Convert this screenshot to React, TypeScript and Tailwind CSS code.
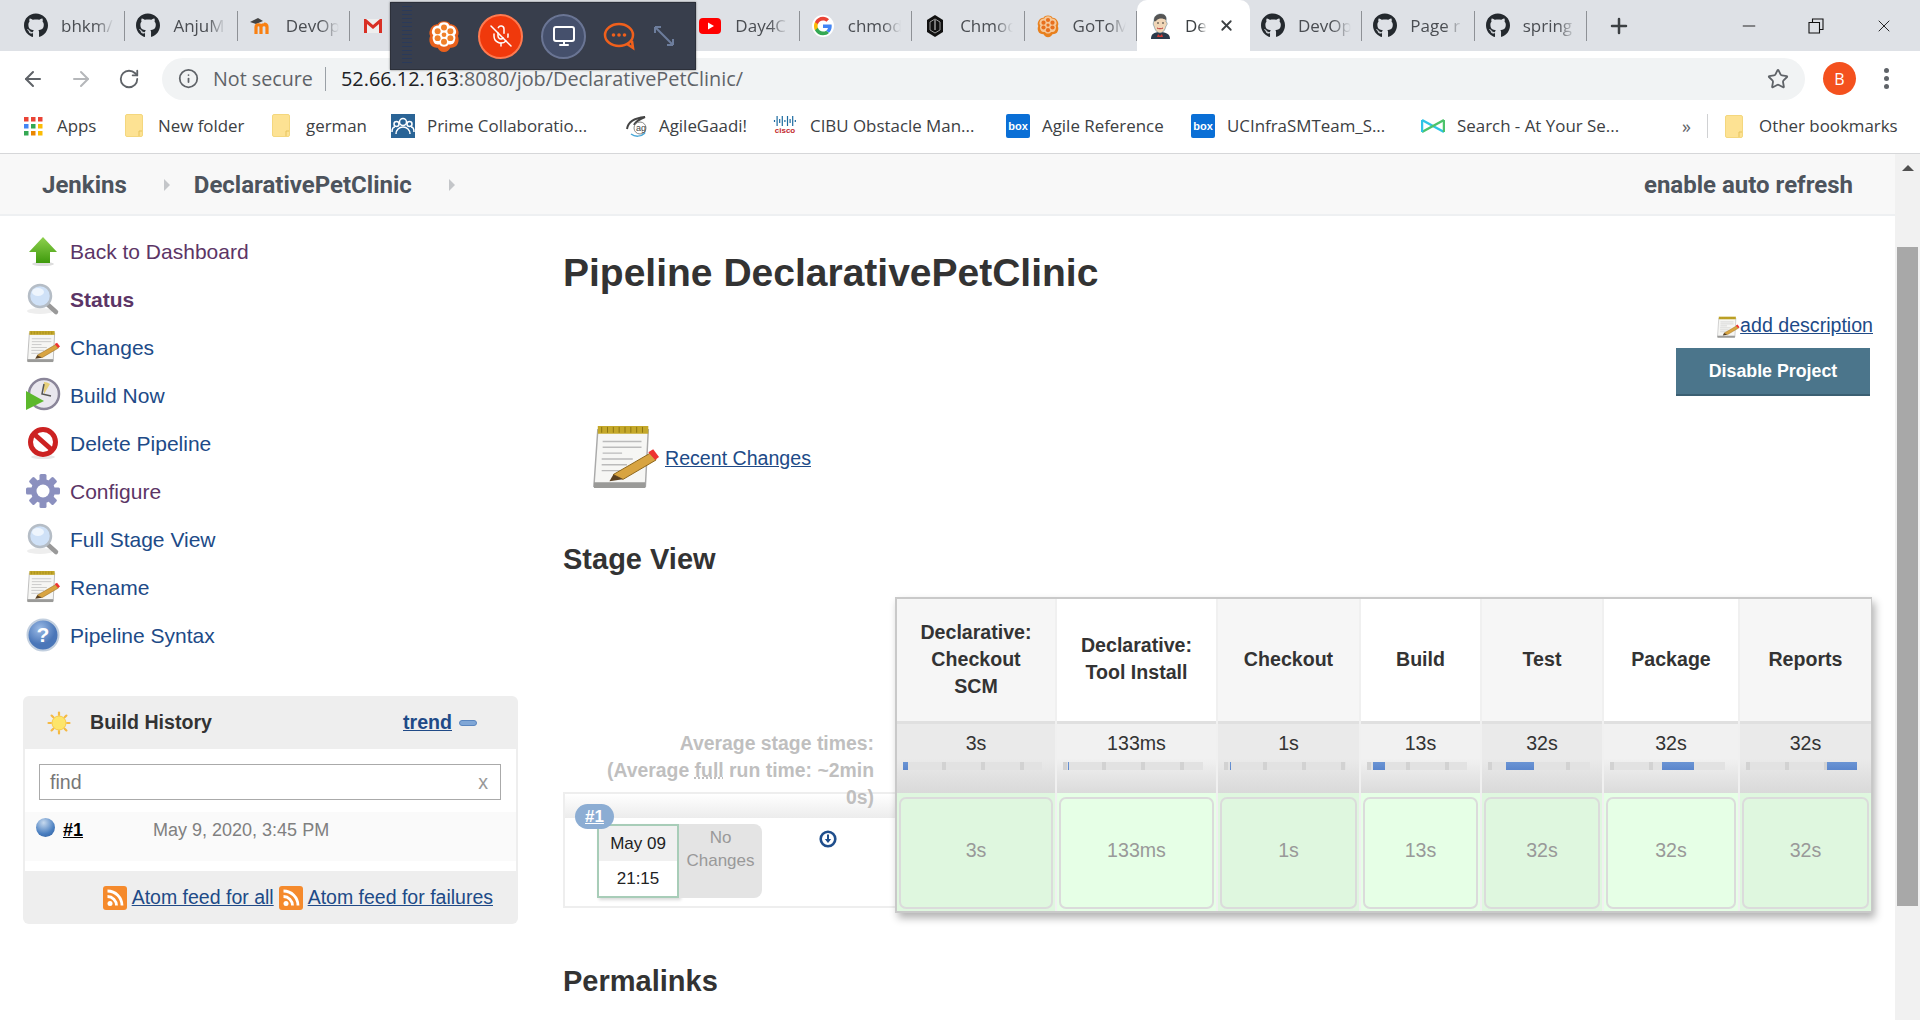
import React from "react";
import { FaGithub } from "react-icons/fa";
import { ArrowLeft, ArrowRight, RotateCw, Star, Info, Plus, X, Minus, MicOff, Monitor } from "lucide-react";

const Gmail = () => (
  <svg width="20" height="18" viewBox="0 0 20 18"><rect x="1" y="2" width="18" height="14" fill="#eee" /><path d="M1 2v14h3V7l6 5 6-5v9h3V2h-2l-7 6-7-6z" fill="#d93025" /></svg>
);
const Moodle = () => (
  <svg width="24" height="22" viewBox="0 0 24 22"><path d="M1 7l8-4 5 3-7 3z" fill="#444" /><path d="M7 19v-7c0-3 5-3 5 0v7M12 19v-7c0-3 6-3 6 0v7M18 19v-7c0-2-1-3-3-3" fill="none" stroke="#f98012" strokeWidth="3.2" /></svg>
);
const YouTube = () => (
  <svg width="22" height="16" viewBox="0 0 22 16"><rect width="22" height="16" rx="4" fill="#f00" /><path d="M9 4.500l6 3.500-6 3.500z" fill="#fff" /></svg>
);
const GoogleG = () => (
  <svg width="22" height="22" viewBox="0 0 48 48"><circle cx="24" cy="24" r="24" fill="#fff" /><path d="M43 24.500c0-1.400-.1-2.700-.3-4H24v7.600h10.800c-.5 2.500-1.900 4.600-4 6l6.200 4.800c3.700-3.400 6-8.400 6-14.400z" fill="#4285f4" /><path d="M24 44c5.400 0 9.900-1.800 13-4.900l-6.200-4.800c-1.800 1.200-4 1.900-6.800 1.900-5.200 0-9.600-3.500-11.200-8.200H6.400v5C9.700 39.500 16.300 44 24 44z" fill="#34a853" /><path d="M12.800 28c-.4-1.200-.6-2.600-.6-4s.2-2.800.6-4v-5H6.400C5 17.600 4.300 20.700 4.300 24s.7 6.400 2.100 9z" fill="#fbbc05" /><path d="M24 11.800c3 0 5.600 1 7.600 3l5.500-5.500C33.900 6.200 29.400 4 24 4 16.300 4 9.700 8.500 6.400 15l6.400 5c1.600-4.700 6-8.200 11.200-8.200z" fill="#ea4335" /></svg>
);
const Chmod = () => (
  <svg width="20" height="24" viewBox="0 0 20 24"><path d="M10 1l8 5v12l-8 5-8-5V6z" fill="#111" /><path d="M10 5l5 3v8l-5 3-5-3V8z" fill="none" stroke="#999" strokeWidth="1" /><path d="M10 6v10" stroke="#ddd" strokeWidth="1" /></svg>
);
const Flower = ({ s = 24, body, dots, shade }: { s?: number; body: string; dots: string; shade: string }) => (
  <svg width={s} height={s} viewBox="0 0 32 32">
    <path d="M16 2c3 0 5 1 6 3 3 0 6 2 7 5 1 2 1 4 0 6 1 2 1 5 0 7-1 3-4 4-7 4-1 2-3 4-6 4s-5-2-6-4c-3 0-6-1-7-4-1-2-1-5 0-7-1-2-1-4 0-6 1-3 4-5 7-5 1-2 3-3 6-3z" fill={shade} />
    <path d="M16 3c3 0 4 1 5 3 3 0 5 1 6 4s0 4-1 5c1 2 1 3 0 6s-3 3-6 3c-1 2-2 2-4 2s-3 0-4-2c-3 0-5 0-6-3s-1-4 0-6c-1-1-2-2-1-5s3-4 6-4c1-2 2-3 5-3z" fill={body} />
    <g fill={dots}><circle cx="16" cy="8" r="2.800" /><circle cx="16" cy="21.500" r="2.800" /><circle cx="10" cy="11.500" r="2.800" /><circle cx="22" cy="11.500" r="2.800" /><circle cx="10" cy="18" r="2.800" /><circle cx="22" cy="18" r="2.800" /><circle cx="16" cy="14.800" r="2.200" /></g>
  </svg>
);
const JenkinsHead = () => (
  <svg width="24" height="26" viewBox="0 0 24 26">
    <path d="M3 26c0-5 3-7 9-7s10 2 10 7z" fill="#2b3a4a" /><path d="M10 21l2 2 2-2 1 3h-6z" fill="#d33833" />
    <path d="M6 8c0-5 3-7 7-7s6 3 5 8c1 0 2 2 0 4-1 4-3 7-6 7-3 0-5-3-6-7-1-1-1-3 0-5z" fill="#f0d6b7" stroke="#49728b" strokeWidth=".5" /><path d="M6 8c0-5 3-7 7-7s6 3 5 6c-3-2-7-2-9 0-1 1-2 2-3 1z" fill="#555" /><circle cx="10" cy="10" r=".8" fill="#222" /><circle cx="15" cy="10" r=".8" fill="#222" /><path d="M9 15c2 1 4 1 6 0" stroke="#b33" fill="none" />
  </svg>
);
const Folder = () => (
  <svg width="18" height="23" viewBox="0 0 18 23"><rect x=".5" y=".5" width="17" height="22" rx="1.500" fill="#fde293" stroke="#f4d77e" /><path d="M14 22v-5h3" fill="none" stroke="#e6c35c" /></svg>
);
const Apps = () => (
  <svg width="20" height="20" viewBox="0 0 20 20">
    {[["#ea4335", "#ea4335", "#ea4335"], ["#4285f4", "#34a853", "#fbbc05"], ["#34a853", "#ea8600", "#fbbc05"]].map((r, i) =>
      r.map((c, j) => <rect key={`${i}${j}`} x={1 + j * 7} y={1 + i * 7} width="4.500" height="4.500" fill={c} />)
    )}
  </svg>
);
const Prime = () => (
  <svg width="24" height="24" viewBox="0 0 24 24"><rect width="24" height="24" fill="#2a6496" /><g fill="none" stroke="#fff" strokeWidth="1.500"><circle cx="12" cy="8" r="3.500" /><circle cx="5.500" cy="10" r="2.500" /><circle cx="18.500" cy="10" r="2.500" /><path d="M5 20c0-4 3-7 7-7s7 3 7 7" /><path d="M1 18c0-3 1-5 3-5M23 18c0-3-1-5-3-5" /></g></svg>
);
const Agile = () => (
  <svg width="24" height="22" viewBox="0 0 24 22"><path d="M2 14C3 7 10 3 20 2c-5 2-9 4-11 8" fill="none" stroke="#444" strokeWidth="2" /><circle cx="15" cy="13" r="6" fill="#fff" stroke="#888" /><text x="11" y="16" fontSize="9" fill="#444" fontFamily="Liberation Sans">ag</text><path d="M6 19c4 3 10 3 14-1" fill="none" stroke="#4aa8d8" strokeWidth="1.500" /></svg>
);
const Cisco = () => (
  <div className="flex flex-col items-center w-[24px]">
    <svg width="24" height="10" viewBox="0 0 24 10"><g stroke="#1b6aa0" strokeWidth="1.200">{[[4, 6], [0, 10], [3, 7], [0, 10], [4, 6], [0, 10], [3, 7], [0, 10], [4, 6]].map(([a, b], i) => <line key={i} x1={1.500 + i * 2.600} x2={1.500 + i * 2.600} y1={a} y2={b} />)}</g></svg>
    <span className="text-[8px] leading-[9px] font-bold text-[#c3272b] font-['Liberation_Sans',sans-serif]">cisco</span>
  </div>
);
const BoxIcon = () => (
  <div className="w-[24px] h-[24px] rounded-[2px] bg-[#0a6fd6] flex items-center justify-center text-white text-[11px] font-bold font-['Liberation_Sans',sans-serif]">box</div>
);
const SearchBm = () => (
  <svg width="24" height="16" viewBox="0 0 24 16"><path d="M1 2l22 12" stroke="#2ec4e6" strokeWidth="2.500" /><path d="M1 14L23 2" stroke="#4cc36a" strokeWidth="2.500" /><path d="M1 2v12" stroke="#2ec4e6" strokeWidth="2.500" /><path d="M23 2v12" stroke="#4cc36a" strokeWidth="2.500" /></svg>
);

/* ---------- Jenkins icons ---------- */
const ArrowUp = () => (
  <svg width="32" height="32" viewBox="0 0 32 32"><defs><linearGradient id="ga" x1="0" y1="0" x2="0" y2="1"><stop offset="0" stopColor="#8fd14f" /><stop offset="1" stopColor="#3e9a0c" /></linearGradient></defs><ellipse cx="16" cy="29" rx="11" ry="2" fill="#ddd" /><path d="M16 2L30 17h-7v11H9V17H2z" fill="url(#ga)" /></svg>
);
const Magnifier = () => (
  <svg width="36" height="34" viewBox="0 0 36 34"><ellipse cx="15" cy="29" rx="13" ry="3" fill="#eee" /><path d="M21 21l10 9" stroke="#999" strokeWidth="4.500" strokeLinecap="round" /><circle cx="15" cy="14" r="11" fill="#cfe1f7" stroke="#b5bdc6" strokeWidth="2.500" /><ellipse cx="13" cy="10" rx="6" ry="4" fill="#eef5fd" /></svg>
);
const Notepad = ({ w = 36, h = 34 }: { w?: number; h?: number }) => (
  <svg width={w} height={h} viewBox="0 0 72 70">
    <path d="M8 6h52l-3 58H4z" fill="#f6f6f4" stroke="#aaa" strokeWidth="1.500" />
    <path d="M4 60h53v6H4z" fill="#9a9a98" />
    <path d="M8 2h52v8H8z" fill="#c4a82a" />
    <g stroke="#8c7510" strokeWidth="1">{[12, 18, 24, 30, 36, 42, 48, 54].map((x) => <line key={x} x1={x} x2={x} y1="3" y2="9" />)}</g>
    <g stroke="#bbb" strokeWidth="1.500"><path d="M13 18h40M13 24h40M13 30h20M12 36h32M12 42h26M12 48h20" /></g>
    <path d="M24 52L62 30l6 7-34 20z" fill="#d8a441" stroke="#8c6418" /><path d="M24 52l10 5-14 2z" fill="#5a4020" /><path d="M60 29l5-3 6 8-4 3z" fill="#e33" />
  </svg>
);
const BuildNow = () => (
  <svg width="36" height="36" viewBox="0 0 36 36"><circle cx="19" cy="17" r="15" fill="#e9e7ee" stroke="#8a8599" strokeWidth="2.500" /><path d="M19 17V5a12 12 0 0 1 6 2z" fill="#e6cf7a" /><path d="M19 7l-2 10 9 2" fill="none" stroke="#555" strokeWidth="1.500" /><path d="M1 14l18 10L1 33z" fill="#5cb82c" /></svg>
);
const Prohibit = () => (
  <svg width="32" height="34" viewBox="0 0 32 34"><ellipse cx="16" cy="31" rx="12" ry="2" fill="#e8e8e8" /><circle cx="16" cy="16" r="12.500" fill="#fff" stroke="#cc2222" strokeWidth="5" /><path d="M7 8l18 16" stroke="#cc2222" strokeWidth="5" /></svg>
);
const Gear = () => (
  <svg width="36" height="36" viewBox="0 0 36 36"><g fill="#8b90bf"><circle cx="18" cy="18" r="12" />{[0, 45, 90, 135, 180, 225, 270, 315].map((a) => <rect key={a} x="14.500" y="1" width="7" height="9" rx="1.500" transform={`rotate(${a} 18 18)`} />)}</g><circle cx="18" cy="18" r="6.500" fill="#fff" /></svg>
);
const Help = () => (
  <svg width="34" height="34" viewBox="0 0 34 34"><defs><radialGradient id="gh" cx=".4" cy=".3"><stop offset="0" stopColor="#9cbbe6" /><stop offset="1" stopColor="#4a76b8" /></radialGradient></defs><circle cx="17" cy="17" r="15.500" fill="url(#gh)" stroke="#c2cfdf" strokeWidth="2" /><text x="17" y="24" textAnchor="middle" fontSize="21" fontWeight="700" fill="#fff" fontFamily="Liberation Sans">?</text></svg>
);
const Sun = () => (
  <svg width="24" height="24" viewBox="0 0 24 24"><g stroke="#f5b942" strokeWidth="2.200" strokeLinecap="round">{[0, 45, 90, 135, 180, 225, 270, 315].map((a) => <line key={a} x1="12" y1="1.500" x2="12" y2="4" transform={`rotate(${a} 12 12)`} />)}</g><circle cx="12" cy="12" r="7" fill="#fde56a" stroke="#f7c948" /></svg>
);
const Rss = () => (
  <svg width="24" height="24" viewBox="0 0 24 24" className="shrink-0"><rect width="24" height="24" rx="3" fill="#f58a2c" /><circle cx="7" cy="17.500" r="2.500" fill="#fff" /><path d="M4.500 10.500a9 9 0 0 1 9 9M4.500 5a14.500 14.500 0 0 1 14.500 14.500" fill="none" stroke="#fff" strokeWidth="2.800" /></svg>
);
const Ball = () => (
  <div className="w-[19px] h-[19px] rounded-full shrink-0 bg-[radial-gradient(circle_at_40%_25%,#c6d9ee,#4a7fc0_60%,#2b5a9a)]" />
);
const DownCircle = () => (
  <svg width="18" height="18" viewBox="0 0 18 18"><circle cx="9" cy="9" r="7.300" fill="#fff" stroke="#1f4e8c" strokeWidth="2.600" /><path d="M9 4.500v5" stroke="#1f4e8c" strokeWidth="2" /><path d="M5.800 9h6.400L9 13z" fill="#1f4e8c" /></svg>
);

const tabs = [
  { i: <FaGithub size={25} color="#24292e" />, t: "bhkm/" },
  { i: <FaGithub size={25} color="#24292e" />, t: "AnjuM" },
  { i: <Moodle />, t: "DevOp" },
  { i: <Gmail />, t: "" },
  { i: null, t: "" },
  { i: null, t: "" },
  { i: <YouTube />, t: "Day4C" },
  { i: <GoogleG />, t: "chmod" },
  { i: <Chmod />, t: "Chmod" },
  { i: <Flower s={26} body="#f5c89a" dots="#e8701e" shade="#e8801e" />, t: "GoToM" },
];
const tabsAfter = [
  { i: <FaGithub size={25} color="#24292e" />, t: "DevOp" },
  { i: <FaGithub size={25} color="#24292e" />, t: "Page r" },
  { i: <FaGithub size={25} color="#24292e" />, t: "spring" },
];

const Tab = ({ i, t }: { i: React.ReactNode; t: string }) => (
  <div className="w-[112.400px] h-[51px] shrink-0 flex items-center relative">
    <div className="w-[24px] ml-[11px] flex justify-center shrink-0">{i}</div>
    <span className="ml-[13px] w-[53px] overflow-hidden whitespace-nowrap text-[17px] text-[#4a4d52] [mask-image:linear-gradient(to_right,black_65%,transparent)]">{t}</span>
    <div className="absolute right-0 top-[11px] h-[30px] w-[1px] bg-[#8e9196]" />
  </div>
);

const bookmarks = [
  { i: <Apps />, t: "Apps", w: "w-[102px]", g: "gap-[14px]" },
  { i: <Folder />, t: "New folder", w: "w-[147px]", g: "gap-[15px]" },
  { i: <Folder />, t: "german", w: "w-[119px]", g: "gap-[16px]" },
  { i: <Prime />, t: "Prime Collaboratio...", w: "w-[234px]", g: "gap-[12px]" },
  { i: <Agile />, t: "AgileGaadi!", w: "w-[148px]", g: "gap-[10px]" },
  { i: <Cisco />, t: "CIBU Obstacle Man...", w: "w-[233px]", g: "gap-[13px]" },
  { i: <BoxIcon />, t: "Agile Reference", w: "w-[185px]", g: "gap-[12px]" },
  { i: <BoxIcon />, t: "UCInfraSMTeam_S...", w: "w-[230px]", g: "gap-[12px]" },
  { i: <SearchBm />, t: "Search - At Your Se...", w: "w-[261px]", g: "gap-[12px]" },
];

const side = [
  { i: <ArrowUp />, t: "Back to Dashboard", c: "text-[#5c3566]" },
  { i: <Magnifier />, t: "Status", c: "text-[#5c3566] font-bold" },
  { i: <Notepad />, t: "Changes", c: "text-[#204a87]" },
  { i: <BuildNow />, t: "Build Now", c: "text-[#204a87]" },
  { i: <Prohibit />, t: "Delete Pipeline", c: "text-[#204a87]" },
  { i: <Gear />, t: "Configure", c: "text-[#5c3566]" },
  { i: <Magnifier />, t: "Full Stage View", c: "text-[#204a87]" },
  { i: <Notepad />, t: "Rename", c: "text-[#204a87]" },
  { i: <Help />, t: "Pipeline Syntax", c: "text-[#204a87]" },
];

const stages = [
  { n: ["Declarative:", "Checkout", "SCM"], v: "3s", w: "w-[160px]", bar: 139, bl: 0, bw: 5 },
  { n: ["Declarative:", "Tool Install"], v: "133ms", w: "w-[161px]", bar: 140, bl: 5, bw: 1 },
  { n: ["Checkout"], v: "1s", w: "w-[143px]", bar: 122, bl: 6, bw: 1 },
  { n: ["Build"], v: "13s", w: "w-[121px]", bar: 100, bl: 6, bw: 12 },
  { n: ["Test"], v: "32s", w: "w-[122px]", bar: 102, bl: 18, bw: 28 },
  { n: ["Package"], v: "32s", w: "w-[136px]", bar: 115, bl: 52, bw: 32 },
  { n: ["Reports"], v: "32s", w: "w-[131px]", bar: 111, bl: 81, bw: 30 },
];

export default function App() {
  return (
    <div className="h-[1020px] w-[1920px] overflow-hidden relative bg-white flex flex-col font-['Liberation_Sans',Arial,sans-serif]">
      {/* Tab strip */}
      <div className="h-[51px] bg-[#dee1e6] flex items-center pl-[13px] shrink-0 font-['Open_Sans',sans-serif]">
        {tabs.map((t, k) => <Tab key={k} i={t.i} t={t.t} />)}
        <div className="w-[113px] h-[51px] shrink-0 bg-white rounded-t-[10px] flex items-center relative">
          <div className="ml-[11px] w-[24px] flex justify-center"><JenkinsHead /></div>
          <span className="ml-[13px] w-[22px] overflow-hidden text-[17px] text-[#3c4043] [mask-image:linear-gradient(to_right,black_60%,transparent)]">Dec</span>
          <X size={17} strokeWidth={2.500} className="ml-[11px] text-[#3c4043]" />
        </div>
        {tabsAfter.map((t, k) => <Tab key={k} i={t.i} t={t.t} />)}
        <Plus size={24} strokeWidth={2.500} className="ml-[20px] text-[#3c4043]" />
        <Minus size={20} strokeWidth={1} className="ml-[108px] text-black" />
        <svg width="16" height="16" viewBox="0 0 16 16" className="ml-[49px]"><path d="M1 4.500h10.500V15H1zM4.500 4.500V1H15v10.500h-3.500" fill="none" stroke="#111" strokeWidth="1.100" /></svg>
        <X size={20} strokeWidth={1} className="ml-[50px] text-black" />
      </div>

      {/* Address row */}
      <div className="h-[55px] bg-white flex items-center shrink-0 font-['Open_Sans',sans-serif]">
        <ArrowLeft size={24} strokeWidth={2} className="ml-[21px] text-[#5f6368]" />
        <ArrowRight size={24} strokeWidth={2} className="ml-[24px] text-[#b5b7ba]" />
        <RotateCw size={22} strokeWidth={2} className="ml-[25px] text-[#5f6368]" />
        <div className="ml-[22px] w-[1643px] h-[42px] rounded-full bg-[#f1f3f4] flex items-center">
          <Info size={21} strokeWidth={2} className="ml-[16px] text-[#5f6368]" />
          <span className="ml-[14px] text-[19.700px] text-[#5f6368] w-[112px] whitespace-nowrap">Not secure</span>
          <div className="w-[1px] h-[24px] bg-[#9aa0a6]" />
          <span className="ml-[15px] text-[19.850px] text-[#202124] whitespace-nowrap">52.66.12.163<span className="text-[#5f6368]">:8080/job/DeclarativePetClinic/</span></span>
          <Star size={22} strokeWidth={2} className="ml-auto mr-[16px] text-[#5f6368]" />
        </div>
        <div className="ml-[18px] w-[33px] h-[33px] rounded-full bg-[#f4511e] flex items-center justify-center text-white text-[16px]">B</div>
        <div className="ml-[28px] flex flex-col gap-[3px]">
          <div className="w-[5px] h-[5px] rounded-full bg-[#5f6368]" /><div className="w-[5px] h-[5px] rounded-full bg-[#5f6368]" /><div className="w-[5px] h-[5px] rounded-full bg-[#5f6368]" />
        </div>
      </div>

      {/* Bookmarks */}
      <div className="h-[48px] bg-white border-b-[1px] border-[#d6d7d9] flex items-center pl-[23px] pb-[7px] shrink-0 font-['Open_Sans',sans-serif] text-[16.900px] text-[#3c4043]">
        {bookmarks.map((b) => (
          <div key={b.t} className={`flex items-center shrink-0 whitespace-nowrap ${b.w} ${b.g}`}>{b.i}<span>{b.t}</span></div>
        ))}
        <span className="text-[18px] text-[#5f6368] w-[18px]">»</span>
        <div className="ml-[7px] w-[1px] h-[24px] bg-[#d0d1d3]" />
        <div className="ml-[17px]"><Folder /></div>
        <span className="ml-[16px] whitespace-nowrap">Other bookmarks</span>
      </div>

      {/* Page + scrollbar */}
      <div className="flex-1 flex min-h-0">
        <div className="w-[1895px] shrink-0 flex flex-col overflow-hidden">
          {/* Breadcrumb */}
          <div className="h-[62px] shrink-0 bg-[#f8f8f8] border-b-[2px] border-[#eef0f2] flex items-center pl-[42px] pr-[42px] pt-[2px] text-[#4d545d] text-[24px] font-bold font-['Roboto',sans-serif]">
            <span>Jenkins</span>
            <div className="ml-[37px] w-0 h-0 border-y-[6px] border-y-transparent border-l-[6px] border-l-[#c4c6c9]" />
            <span className="ml-[24px]">DeclarativePetClinic</span>
            <div className="ml-[37px] w-0 h-0 border-y-[6px] border-y-transparent border-l-[6px] border-l-[#c4c6c9]" />
            <span className="ml-auto">enable auto refresh</span>
          </div>

          <div className="flex flex-1 min-h-0 text-[19.600px] leading-[27px]">
            {/* Sidebar */}
            <div className="w-[563px] shrink-0 pl-[23px] pt-[11px]">
              <div className="flex flex-col text-[21px]">
                {side.map((s) => (
                  <div key={s.t} className="h-[48px] flex items-center">
                    <div className="w-[40px] flex justify-center shrink-0">{s.i}</div>
                    <span className={`ml-[7px] ${s.c}`}>{s.t}</span>
                  </div>
                ))}
              </div>
              <div className="mt-[37px] w-[495px] h-[228px] bg-[#eeeeee] rounded-[6px] px-[2px] flex flex-col">
                <div className="h-[53px] flex items-center shrink-0">
                  <div className="ml-[22px]"><Sun /></div>
                  <span className="ml-[19px] font-bold text-[#333]">Build History</span>
                  <a className="ml-auto font-bold text-[#204a87] underline">trend</a>
                  <div className="ml-[7px] mr-[39px] w-[18px] h-[6px] rounded-full bg-[#7fa6d6] border border-[#5a86bf]" />
                </div>
                <div className="h-[122px] bg-white shrink-0 flex flex-col">
                  <div className="ml-[14px] mr-[15px] mt-[15px] h-[36px] border border-[#aaa] flex items-center px-[10px] text-[#777]">
                    <span>find</span><span className="ml-auto mr-[2px] text-[#999]">x</span>
                  </div>
                  <div className="mt-[12px] h-[49px] bg-[#fafafa] flex items-start pt-[6px] pl-[11px]">
                    <Ball />
                    <a className="ml-[8px] font-bold text-black underline text-[18px] leading-[24px]">#1</a>
                    <span className="ml-[70px] text-[#808080] text-[18px] leading-[24px]">May 9, 2020, 3:45 PM</span>
                  </div>
                </div>
                <div className="flex-1 flex items-center justify-end pr-[23px] text-[#204a87] text-[19.500px] gap-[5px]">
                  <Rss /><a className="underline">Atom feed for all</a><Rss /><a className="underline">Atom feed for failures</a>
                </div>
              </div>
            </div>

            {/* Main */}
            <div className="flex-1 min-w-0 flex flex-col relative">
              <h1 className="mt-[33px] text-[39px] leading-[48px] font-bold text-[#333]">Pipeline DeclarativePetClinic</h1>
              <div className="mt-[15px] flex flex-col items-end pr-[22px]">
                <div className="flex items-end">
                  <Notepad w={24} h={23} />
                  <a className="text-[#204a87] underline">add description</a>
                </div>
                <button className="mt-[9px] mr-[3px] w-[194px] h-[48px] bg-[#4b758b] border-b-[2px] border-[#3b5f72] text-white font-bold text-[17.800px]">Disable Project</button>
              </div>
              <div className="mt-[27px] ml-[27px] flex items-center h-[70px]">
                <Notepad w={70} h={68} />
                <a className="ml-[5px] text-[#204a87] underline">Recent Changes</a>
              </div>
              <h2 className="mt-[46px] text-[29px] leading-[40px] font-bold text-[#333]">Stage View</h2>

              {/* Stage view */}
              <div className="mt-[18px] flex items-start">
                <div className="w-[332px] shrink-0 pt-[133px]">
                  <div className="relative z-10 h-[62px] ml-[38px] pr-[21px] text-right font-bold text-[19.400px] text-[#c0bfbf]">Average stage times:<br />(Average <span className="underline decoration-dotted">full</span> run time: ~2min 0s)</div>
                  <div className="relative h-[116px] border-[2px] border-[#eeeeee] border-r-0">
                    <div className="h-[24px] bg-[linear-gradient(#fff,#ececec)]" />
                    <div className="flex ml-[32px] mt-[6px] h-[74px]">
                      <div className="w-[82px] h-[74px] border-[2px] border-[#a8cdb8] flex flex-col text-[#222] text-[17px] text-center shadow-[2px_2px_3px_rgba(0,0,0,.15)]">
                        <div className="h-[35px] bg-[#f0f0f0] flex items-center justify-center">May 09</div>
                        <div className="flex-1 bg-white flex items-center justify-center">21:15</div>
                      </div>
                      <div className="w-[83px] h-[74px] bg-[#e4e4e4] rounded-r-[8px] text-center text-[#999] text-[17px] leading-[23px] pt-[2px] px-[1px]">No<br />Changes</div>
                      <div className="ml-[57px] mt-[6px]"><DownCircle /></div>
                    </div>
                    <div className="absolute left-[10px] top-[10px] w-[39px] h-[25px] rounded-full bg-[#8cadd3] text-white font-bold text-[17px] leading-[25px] text-center underline">#1</div>
                  </div>
                </div>

                <div className="flex shrink-0 w-[977px] h-[316px] border-[2px] border-[#c9c9c9] bg-[#f0f0f0] shadow-[3px_5px_8px_rgba(0,0,0,.3)] relative z-20">
                  {stages.map((s, k) => {
                    const odd = k % 2 === 0;
                    return (
                      <div key={k} className={`${s.w} shrink-0 flex flex-col ${k < 6 ? "border-r-[2px] border-[#f0f0f0]" : ""}`}>
                        <div className={`h-[122px] shrink-0 flex flex-col items-center justify-center pb-[2px] font-bold text-[#333] ${odd ? "bg-[#f6f6f6]" : "bg-white"}`}>
                          {s.n.map((l) => <div key={l}>{l}</div>)}
                        </div>
                        <div className={`h-[72px] shrink-0 border-t-[3px] border-[#e0e0e0] flex flex-col ${odd ? "bg-[linear-gradient(#eaeaea_50%,#d9d9d9)]" : "bg-[linear-gradient(#f1f1f1_50%,#dbdbdb)]"}`}>
                          <div className="text-center text-[#333] mt-[6px]">{s.v}</div>
                          <div className="h-[8px] mt-[5px] ml-[6px] flex bg-[repeating-linear-gradient(90deg,#d2d2d2_0,#d2d2d2_4px,#e2e2e2_4px,#e2e2e2_39px)]" style={{ width: s.bar }}>
                            <div className="h-[8px] bg-[linear-gradient(#6a94d4,#5b86cc)]" style={{ marginLeft: s.bl, width: s.bw }} />
                          </div>
                        </div>
                        <div className={`flex-1 pt-[4px] pb-[2px] px-[2px] ${odd ? "bg-[#dff7df]" : "bg-[#e6ffe6]"}`}>
                          <div className="h-full rounded-[7px] border-[2px] border-[#dbdbdb] flex items-center justify-center pb-[6px] text-[#999]">{s.v}</div>
                        </div>
                      </div>
                    );
                  })}
                </div>
              </div>

              <h2 className="mt-[48px] text-[29px] leading-[40px] font-bold text-[#333]">Permalinks</h2>
            </div>
          </div>
        </div>

        {/* Scrollbar */}
        <div className="w-[25px] shrink-0 bg-[#f1f1f1] flex flex-col items-center">
          <div className="mt-[11px] w-0 h-0 border-x-[6px] border-x-transparent border-b-[6px] border-b-[#505050]" />
          <div className="mt-[76px] w-[21px] h-[659px] bg-[#a8a8a8]" />
        </div>
      </div>

      {/* Floating meeting toolbar */}
      <div className="absolute left-[390px] top-[2px] w-[306px] h-[68px] bg-[#383e4c] border border-[#2c303a] flex items-center shadow-[0_0_2px_rgba(0,0,0,.5)]">
        <div className="ml-[11px] w-[10px] h-[60px] bg-[repeating-linear-gradient(#2a3a5a_0,#2a3a5a_1px,transparent_1px,transparent_4px)]" />
        <div className="ml-[15px]"><Flower s={34} body="#fff" dots="#f0802a" shade="#e8601c" /></div>
        <div className="ml-[17px] w-[45px] h-[45px] rounded-full bg-[#f0390c] border-[2px] border-[#ff7a50] flex items-center justify-center"><MicOff size={24} strokeWidth={1.500} className="text-white" /></div>
        <div className="ml-[18px] w-[45px] h-[45px] rounded-full bg-[#45506c] border-[2px] border-[#6a7594] flex items-center justify-center"><Monitor size={24} strokeWidth={2} className="text-white" /></div>
        <svg width="34" height="30" viewBox="0 0 34 30" className="ml-[17px]"><ellipse cx="16" cy="14" rx="14" ry="11" fill="none" stroke="#f0601c" strokeWidth="2.500" /><path d="M24 23l6 4-1-7" fill="none" stroke="#f0601c" strokeWidth="2.500" /><g fill="#f0601c"><circle cx="10.500" cy="14" r="1.800" /><circle cx="16" cy="14" r="1.800" /><circle cx="21.500" cy="14" r="1.800" /></g></svg>
        <svg width="24" height="24" viewBox="0 0 24 24" className="ml-[15px]"><path d="M3 3l18 18M3 3h6M3 3v6M21 21h-6M21 21v-6" fill="none" stroke="#6d7d9c" strokeWidth="2" /></svg>
      </div>
    </div>
  );
}
